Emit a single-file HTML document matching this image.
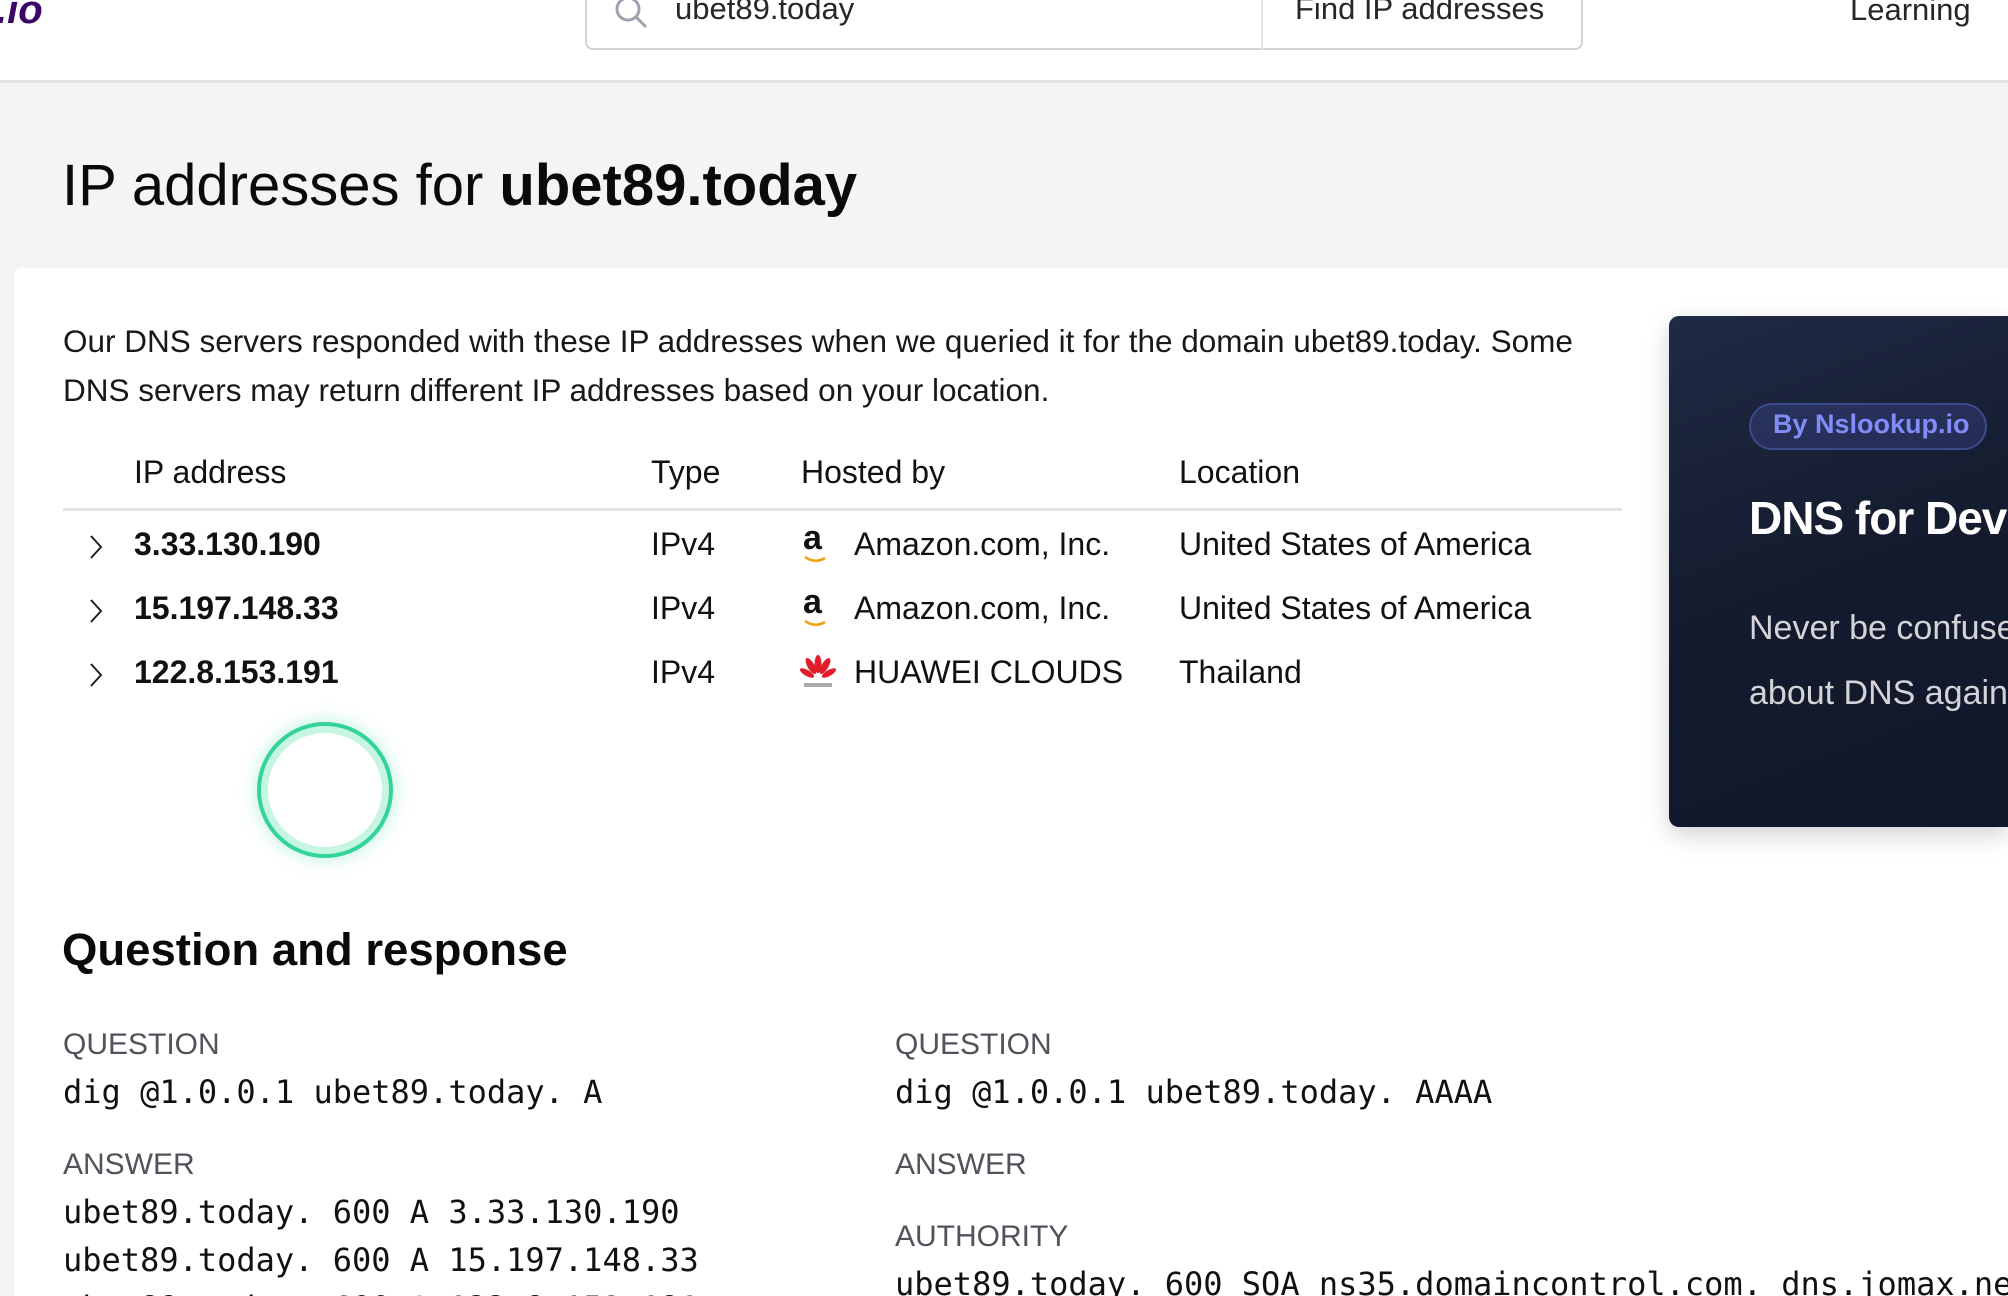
<!DOCTYPE html>
<html><head><meta charset="utf-8"><style>
*{box-sizing:border-box;margin:0;padding:0}
html,body{width:2008px;height:1296px;overflow:hidden}
body{background:#f4f4f5;font-family:"Liberation Sans",sans-serif;color:#111;position:relative}
#wrap{position:absolute;left:0;top:0;width:2008px;height:1296px;overflow:hidden}
.hdr{position:absolute;left:0;top:0;width:2008px;height:83px;background:#fff;border-bottom:3px solid #e4e4e7}
.abs{position:absolute;white-space:nowrap}
.search{position:absolute;left:585px;top:-10px;width:998px;height:60px;border:2px solid #d4d4d8;border-top:none;border-radius:0 0 8px 8px;background:#fff}
.card{position:absolute;left:14px;top:268px;width:1994px;height:1028px;background:#fff;border-radius:8px 0 0 0}
.mono{font-family:"DejaVu Sans Mono","Liberation Mono",monospace;font-size:32px;color:#111}
.lbl{font-size:30px;color:#52525b}
.row{font-size:32px}
.ad{position:absolute;left:1669px;top:316px;width:339px;height:511px;border-radius:10px 0 0 10px;background:linear-gradient(160deg,#1f2a44 0%,#141b2e 50%,#0f172a 100%);box-shadow:0 8px 24px rgba(0,0,0,.18);overflow:hidden}
</style></head><body><div id="wrap">
<div class="hdr">
  <div class="abs" style="left:-4px;top:-12px;font-size:40px;font-weight:bold;font-style:italic;color:#3b0764">.io</div>
  <div class="search">
    <svg class="abs" style="left:26px;top:6px" width="36" height="36" viewBox="0 0 36 36"><circle cx="15" cy="13" r="11" fill="none" stroke="#9ca3af" stroke-width="3"/><path d="M23 21l9 9" stroke="#9ca3af" stroke-width="3" stroke-linecap="round"/></svg>
    <div class="abs" style="left:88px;top:1px;font-size:31px;color:#27272a">ubet89.today</div>
    <div style="position:absolute;left:674px;top:0;width:2px;height:60px;background:#e4e4e7"></div>
    <div class="abs" style="left:708px;top:1px;font-size:31px;color:#27272a">Find IP addresses</div>
  </div>
  <div class="abs" style="left:1850px;top:-8px;font-size:31px;color:#27272a">Learning</div>
</div>
<div class="abs" style="left:62px;top:152px;font-size:58px;color:#0a0a0a">IP addresses for <b>ubet89.today</b></div>
<div class="card"></div>
<div class="abs" style="left:63px;top:317px;font-size:31.5px;line-height:49px;color:#18181b;white-space:normal;width:1570px">Our DNS servers responded with these IP addresses when we queried it for the domain ubet89.today. Some DNS servers may return different IP addresses based on your location.</div>
<div class="abs row" style="left:134px;top:454px">IP address</div>
<div class="abs row" style="left:651px;top:454px">Type</div>
<div class="abs row" style="left:801px;top:454px">Hosted by</div>
<div class="abs row" style="left:1179px;top:454px">Location</div>
<div style="position:absolute;left:63px;top:508px;width:1559px;height:3px;background:#e4e4e7"></div>

<svg class="abs" style="left:88px;top:533px" width="16" height="28"><path d="M3 3l10 11L3 25" fill="none" stroke="#222" stroke-width="2"/></svg>
<div class="abs row" style="left:134px;top:526px;font-weight:bold">3.33.130.190</div>
<div class="abs row" style="left:651px;top:526px">IPv4</div>
<div class="abs" style="left:803px;top:519px;font-size:34px;font-weight:bold">a</div>
<svg class="abs" style="left:803px;top:555px" width="26" height="10"><path d="M2 2q10 7 20 1" fill="none" stroke="#f59e0b" stroke-width="2.5"/></svg>
<div class="abs row" style="left:854px;top:526px">Amazon.com, Inc.</div>
<div class="abs row" style="left:1179px;top:526px">United States of America</div>

<svg class="abs" style="left:88px;top:597px" width="16" height="28"><path d="M3 3l10 11L3 25" fill="none" stroke="#222" stroke-width="2"/></svg>
<div class="abs row" style="left:134px;top:590px;font-weight:bold">15.197.148.33</div>
<div class="abs row" style="left:651px;top:590px">IPv4</div>
<div class="abs" style="left:803px;top:583px;font-size:34px;font-weight:bold">a</div>
<svg class="abs" style="left:803px;top:619px" width="26" height="10"><path d="M2 2q10 7 20 1" fill="none" stroke="#f59e0b" stroke-width="2.5"/></svg>
<div class="abs row" style="left:854px;top:590px">Amazon.com, Inc.</div>
<div class="abs row" style="left:1179px;top:590px">United States of America</div>

<svg class="abs" style="left:88px;top:661px" width="16" height="28"><path d="M3 3l10 11L3 25" fill="none" stroke="#222" stroke-width="2"/></svg>
<div class="abs row" style="left:134px;top:654px;font-weight:bold">122.8.153.191</div>
<div class="abs row" style="left:651px;top:654px">IPv4</div>
<svg class="abs" style="left:800px;top:654px" width="36" height="36" viewBox="0 0 36 36"><g fill="#e11d2a"><ellipse cx="18" cy="10" rx="3.5" ry="9"/><ellipse cx="11" cy="12" rx="3.5" ry="9" transform="rotate(-30 11 12)"/><ellipse cx="25" cy="12" rx="3.5" ry="9" transform="rotate(30 25 12)"/><ellipse cx="7" cy="19" rx="3" ry="8" transform="rotate(-60 7 19)"/><ellipse cx="29" cy="19" rx="3" ry="8" transform="rotate(60 29 19)"/></g><rect x="4" y="29" width="28" height="4" fill="#aaa"/></svg>
<div class="abs row" style="left:854px;top:654px">HUAWEI CLOUDS</div>
<div class="abs row" style="left:1179px;top:654px">Thailand</div>

<div style="position:absolute;left:257px;top:722px;width:136px;height:136px;border-radius:50%;border:4px solid #34d399;box-shadow:0 0 18px rgba(52,211,153,.35),inset 0 0 0 7px #c6f6e0"></div>

<div class="ad">
  <div style="position:absolute;left:80px;top:87px;width:238px;height:47px;border-radius:24px;border:2px solid #3b4a8a;background:rgba(79,92,190,.25)"></div>
  <div class="abs" style="left:104px;top:93px;font-size:27px;font-weight:bold;color:#818cf8">By Nslookup.io</div>
  <div class="abs" style="left:80px;top:175px;font-size:46px;font-weight:bold;color:#fff;letter-spacing:-1px">DNS for Developers</div>
  <div class="abs" style="left:80px;top:293px;font-size:34px;color:#d4d4d8">Never be confused</div>
  <div class="abs" style="left:80px;top:358px;font-size:34px;color:#d4d4d8">about DNS again</div>
</div>

<div class="abs" style="left:62px;top:924px;font-size:45.5px;font-weight:bold;color:#0a0a0a">Question and response</div>
<div class="abs lbl" style="left:63px;top:1028px">QUESTION</div>
<div class="abs mono" style="left:63px;top:1073px">dig @1.0.0.1 ubet89.today. A</div>
<div class="abs lbl" style="left:63px;top:1148px">ANSWER</div>
<div class="abs mono" style="left:63px;top:1193px">ubet89.today. 600 A 3.33.130.190</div>
<div class="abs mono" style="left:63px;top:1241px">ubet89.today. 600 A 15.197.148.33</div>
<div class="abs mono" style="left:63px;top:1289px">ubet89.today. 600 A 122.8.153.191</div>
<div class="abs lbl" style="left:895px;top:1028px">QUESTION</div>
<div class="abs mono" style="left:895px;top:1073px">dig @1.0.0.1 ubet89.today. AAAA</div>
<div class="abs lbl" style="left:895px;top:1148px">ANSWER</div>
<div class="abs lbl" style="left:895px;top:1220px">AUTHORITY</div>
<div class="abs mono" style="left:895px;top:1265px">ubet89.today. 600 SOA ns35.domaincontrol.com. dns.jomax.net.</div>
</div></body></html>
